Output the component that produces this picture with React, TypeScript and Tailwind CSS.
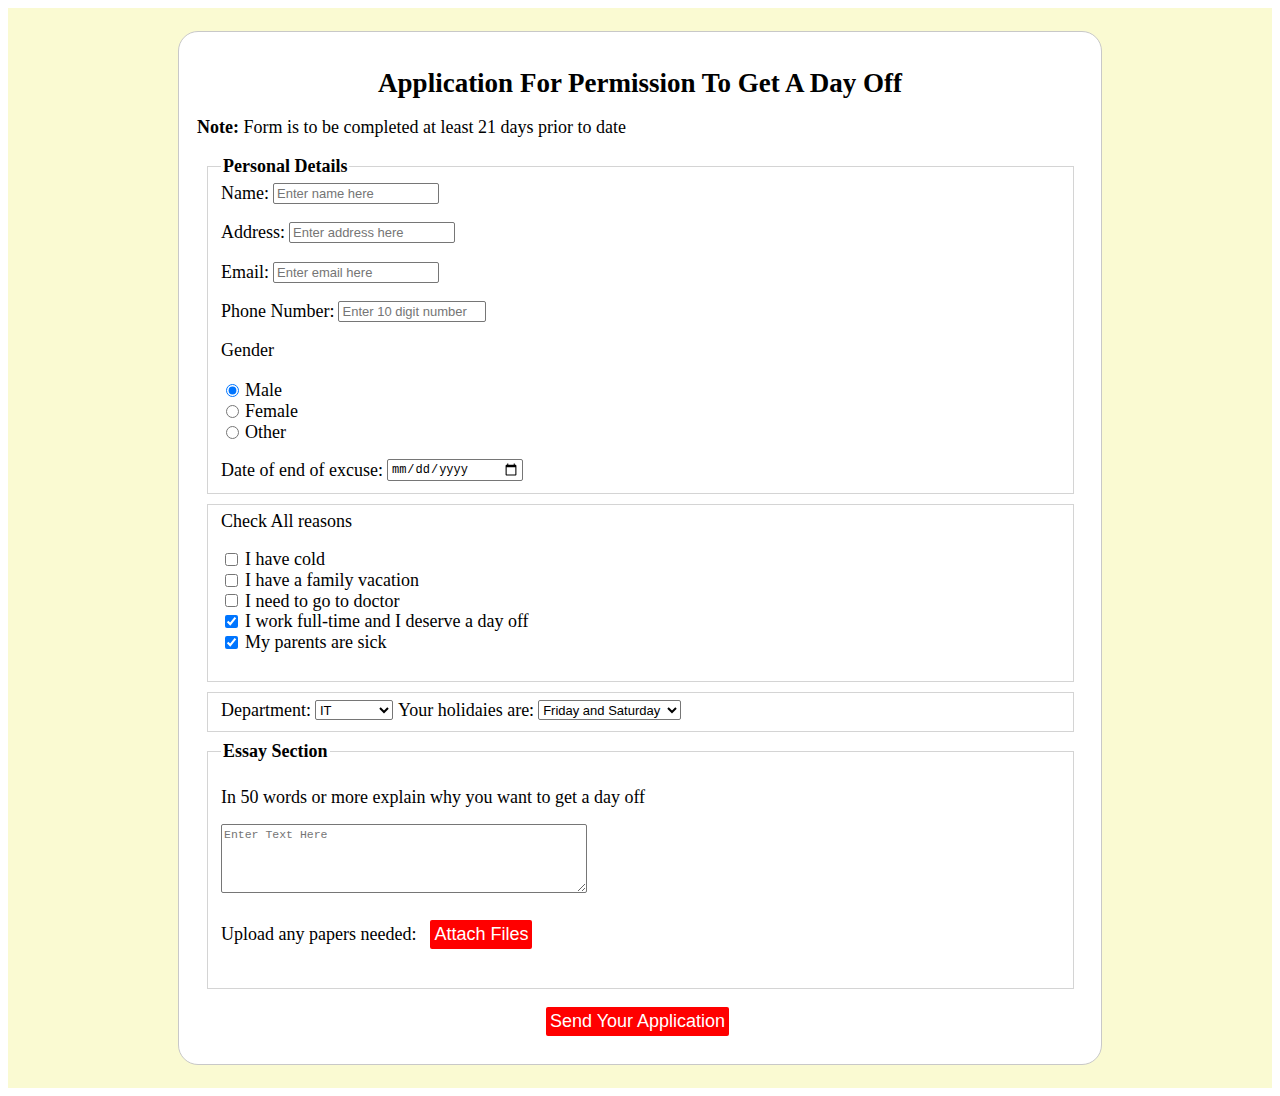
import React from 'react';

const inputCls =
  "h-[21px] border border-[#767676] rounded-[2px] bg-white px-[3px] text-[13px] font-['Liberation_Sans',Arial,sans-serif] text-black placeholder:text-[#757575] outline-none";

const reasons = [
  { label: 'I have cold', checked: false },
  { label: 'I have a family vacation', checked: false },
  { label: 'I need to go to doctor', checked: false },
  { label: 'I work full-time and I deserve a day off', checked: true },
  { label: 'My parents are sick', checked: true },
];

function TextRow({ label, placeholder, width, className }: { label: string; placeholder: string; width: string; className?: string }) {
  return (
    <div className={`flex items-center h-[21px] ${className ?? ''}`}>
      <span>{label}</span>
      <input type="text" placeholder={placeholder} className={`${inputCls} ${width} ml-[4px]`} />
    </div>
  );
}

export default function App() {
  return (
    <div className="bg-white p-2 font-['Liberation_Serif','Times_New_Roman',serif] text-[18px] text-black">
      <div className="bg-[#fafad2] pt-[23px] pb-[23px]">
        <div className="w-[924px] mx-auto bg-white border border-[#c8c8c8] rounded-[20px] px-[18px] pt-[36px] pb-[28px]">
          <h1 className="text-[27px] leading-[31px] font-bold text-center">
            Application For Permission To Get A Day Off
          </h1>
          <p className="mt-[18px] leading-[21px]">
            <b>Note:</b> Form is to be completed at least 21 days prior to date
          </p>

          {/* Personal details */}
          <fieldset className="mt-[18px] ml-[10px] mr-[9px] border border-[#d4d4d4] pl-[13px] pr-[12px] pb-[12px]">
            <legend className="px-[2px] font-bold leading-[21px]">Personal Details</legend>
            <TextRow label="Name:" placeholder="Enter name here" width="w-[166px]" className="mt-[6px]" />
            <TextRow label="Address:" placeholder="Enter address here" width="w-[166px]" className="mt-[18px]" />
            <TextRow label="Email:" placeholder="Enter email here" width="w-[166px]" className="mt-[19px]" />
            <TextRow label="Phone Number:" placeholder="Enter 10 digit number" width="w-[148px]" className="mt-[18px]" />
            <div className="mt-[18px] h-[21px] leading-[21px]">Gender</div>
            <div className="mt-[19px]">
              {['Male', 'Female', 'Other'].map((g) => (
                <label key={g} className="flex items-center h-[21px]">
                  <input type="radio" name="gender" defaultChecked={g === 'Male'} className="w-[13px] h-[13px] ml-[5px] mr-[6px]" />
                  {g}
                </label>
              ))}
            </div>
            <div className="mt-[16px] flex items-center h-[22px]">
              <span>Date of end of excuse:</span>
              <input
                type="date"
                className="ml-[4px] w-[136px] h-[22px] border border-[#767676] rounded-[2px] bg-white pl-[3px] pr-[4px] text-[12px] font-['Liberation_Mono',monospace] text-black [&::-webkit-calendar-picker-indicator]:w-[14px] [&::-webkit-calendar-picker-indicator]:h-[14px] [&::-webkit-calendar-picker-indicator]:p-0"
              />
            </div>
          </fieldset>

          {/* Reasons */}
          <fieldset className="mt-[10px] ml-[10px] mr-[9px] border border-[#d4d4d4] pl-[13px] pr-[12px] pt-[6px] pb-[28px]">
            <div className="h-[21px] leading-[21px]">Check All reasons</div>
            <div className="mt-[17px]">
              {reasons.map((r) => (
                <label key={r.label} className="flex items-center h-[20.8px]">
                  <input type="checkbox" defaultChecked={r.checked} className="w-[13px] h-[13px] ml-[4px] mr-[7px]" />
                  {r.label}
                </label>
              ))}
            </div>
          </fieldset>

          {/* Department */}
          <fieldset className="mt-[10px] ml-[10px] mr-[9px] border border-[#d4d4d4] pl-[13px] pr-[12px] pt-[7px] pb-[10px]">
            <div className="flex items-center h-[21px]">
              <span>Department:</span>
              <select
                defaultValue="IT"
                className="ml-[4px] w-[78px] h-[20px] border border-[#767676] rounded-[2px] bg-white text-[13px] font-['Liberation_Sans',Arial,sans-serif] text-black"
              >
                <option>IT</option>
                <option>HR</option>
                <option>Finance</option>
              </select>
              <span className="ml-[5px]">Your holidaies are:</span>
              <select
                defaultValue="Friday and Saturday"
                className="ml-[4px] w-[143px] h-[20px] border border-[#767676] rounded-[2px] bg-white text-[13px] font-['Liberation_Sans',Arial,sans-serif] text-black"
              >
                <option>Friday and Saturday</option>
                <option>Saturday and Sunday</option>
              </select>
            </div>
          </fieldset>

          {/* Essay */}
          <fieldset className="mt-[9px] ml-[10px] mr-[9px] border border-[#d4d4d4] pl-[13px] pr-[12px] pb-[39px]">
            <legend className="px-[2px] font-bold leading-[21px]">Essay Section</legend>
            <div className="mt-[25px] h-[21px] leading-[21px]">In 50 words or more explain why you want to get a day off</div>
            <textarea
              placeholder="Enter Text Here"
              className="block mt-[16px] w-[366px] h-[69px] border border-[#767676] rounded-[2px] bg-white px-[2px] py-[1px] text-[11.5px] font-['Liberation_Mono',monospace] text-black placeholder:text-[#757575] resize outline-none"
            />
            <div className="mt-[27px] flex items-center h-[29px]">
              <span>Upload any papers needed:</span>
              <button className="ml-[14px] h-[29px] px-[4px] bg-[#ff0000] text-white rounded-[2px] text-[18px] leading-[21px] font-['Liberation_Sans',Arial,sans-serif]">
                Attach Files
              </button>
            </div>
          </fieldset>

          <div className="mt-[18px] flex justify-center pr-[5px]">
            <button className="h-[29px] px-[4px] bg-[#ff0000] text-white rounded-[2px] text-[18px] leading-[21px] font-['Liberation_Sans',Arial,sans-serif]">
              Send Your Application
            </button>
          </div>
        </div>
      </div>
    </div>
  );
}
